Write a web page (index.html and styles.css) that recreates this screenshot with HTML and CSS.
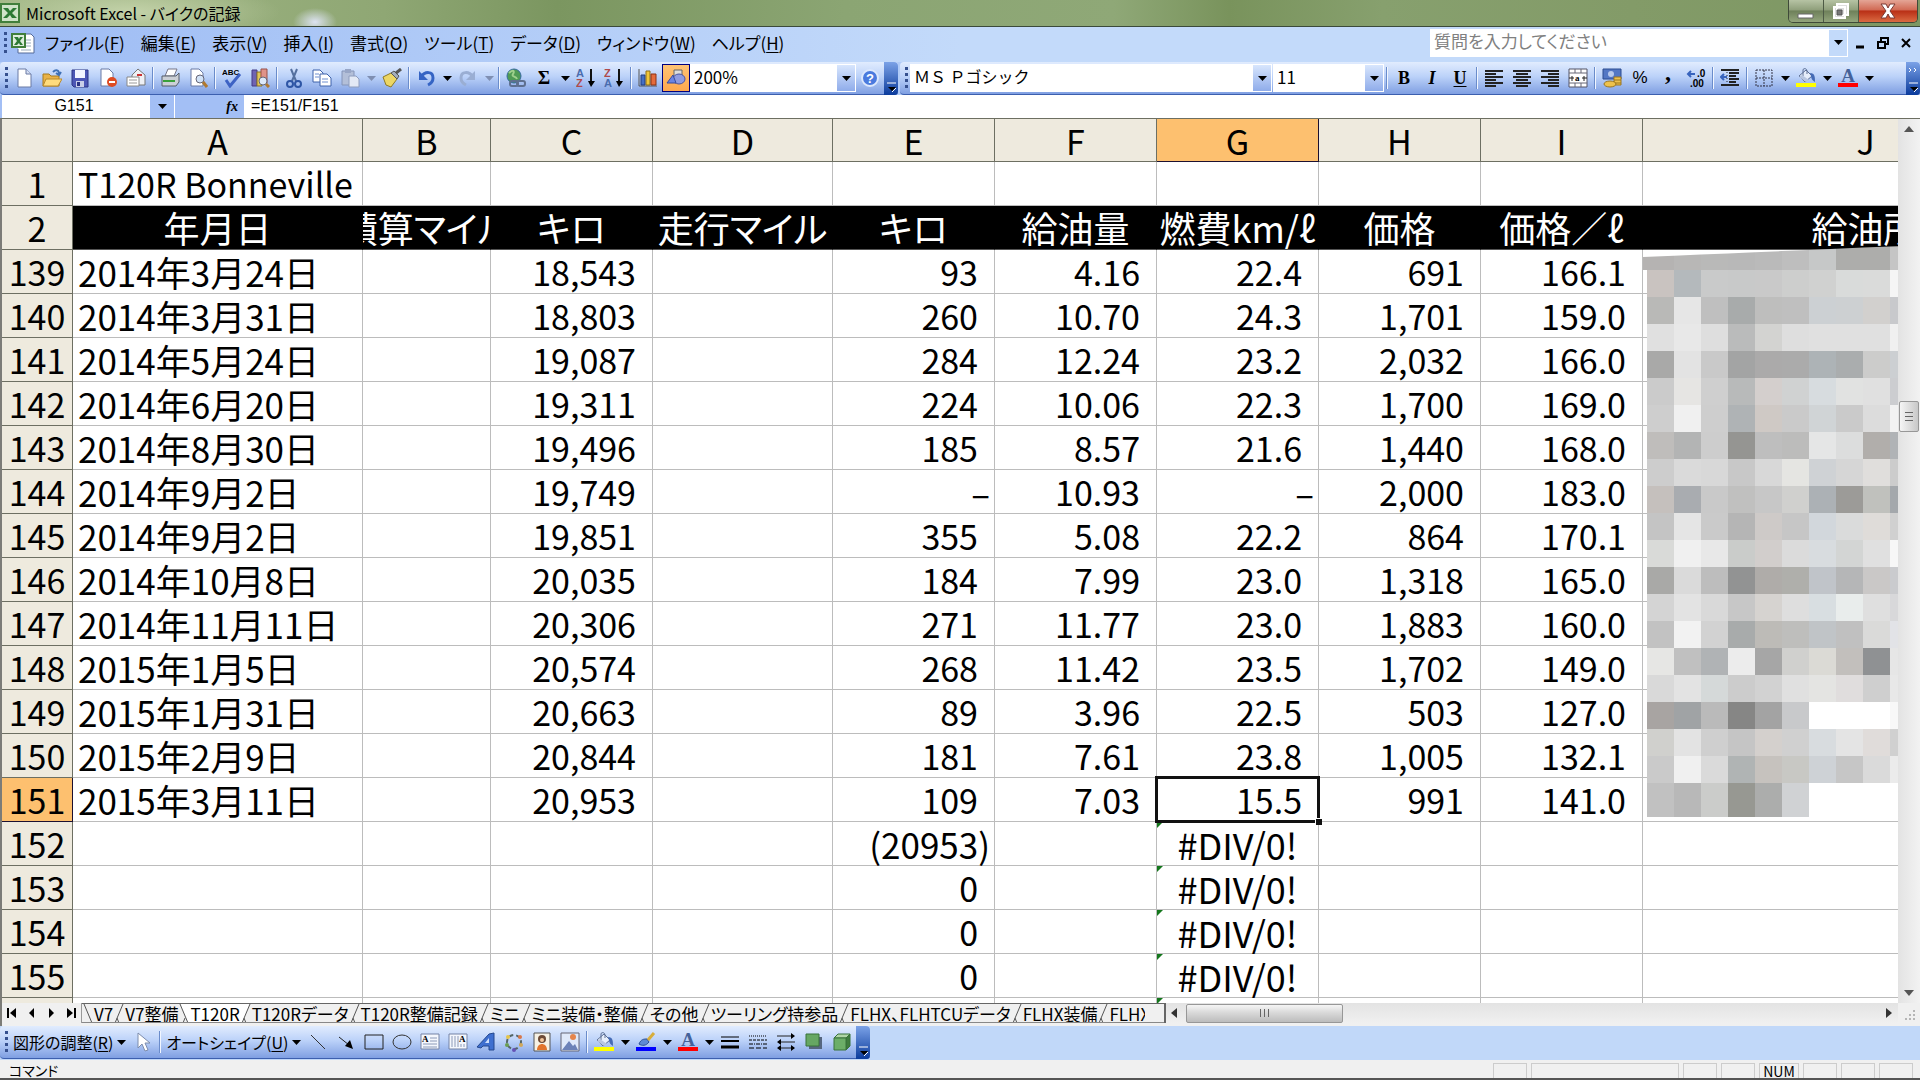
FILE: index.html
```
<!DOCTYPE html>
<html lang="ja">
<head>
<meta charset="utf-8">
<title>Microsoft Excel - バイクの記録</title>
<link rel="stylesheet" href="styles.css">
</head>
<body>

<!-- shared icons -->
<svg class="defs" aria-hidden="true">
    <symbol id="caret" viewBox="0 0 9 5"><path d="M0 0h9L4.500 5z"/></symbol>
    <symbol id="bucket" viewBox="0 0 20 20">
        <path d="M3 8l7-6 6 6-7 6z" fill="#e6eefb" stroke="#5c6f94"/>
        <path d="M7 8V2c0-2 4-2 4 1v3" fill="none" stroke="#5c6f94"/>
        <path d="M14 5c5 0 5 4 5 9-2-1-4-3-4-6z" fill="#456bb5"/>
        <path d="M3 9l7 5 3-2-7-5z" fill="#b8c6e0"/>
    </symbol>
    <symbol id="more" viewBox="0 0 14 32">
        <path d="M3 21h9" stroke="#fff"/><path d="M4 25h8l-4 4z"/><path d="M8 30l4-4" stroke="#fff"/>
    </symbol>
    <symbol id="slash" viewBox="0 0 12 20"><path d="M10 0L2 19M4 14l2 5" fill="none" stroke="#555"/></symbol>
    <symbol id="xl" viewBox="0 0 20 20">
        <path d="M1 1h18v18H1z" fill="#cfe3c8" stroke="#417f3b" stroke-width="2"/>
        <path d="M3 5h5l2 3 3-3h4l-5 5 5 5h-5l-2-3-3 3H3l5-5z" fill="#2d7a34"/>
    </symbol>
</svg>

<header class="titlebar">
    <svg class="app-icon" viewBox="0 0 20 20"><use href="#xl"/></svg>
    <span class="title">Microsoft Excel - バイクの記録</span>
    <div class="window-buttons">
        <button class="min" aria-label="最小化"><svg width="18" height="16"><path d="M1 11h15v4H1z" fill="#fff" stroke="#666"/></svg></button>
        <button class="max" aria-label="元に戻す"><svg width="18" height="18"><path d="M5 2h11v11H5zM2 5h11v11H2z" fill="#ddd" stroke="#fff" stroke-width="2"/><path d="M5 8h5v5H5z" fill="#777" stroke="#555"/></svg></button>
        <button class="close" aria-label="閉じる"><svg width="18" height="16"><path d="M2 1h5l2 4 2-4h5l-5 7 5 7h-5l-2-4-2 4H2l5-7z" fill="#fff" stroke="#7a3a34"/></svg></button>
    </div>
</header>

<nav class="menubar">
    <i class="grip"></i>
    <svg class="doc-icon" viewBox="0 0 24 24"><path d="M11 3h9l3 3v16H7v-4" fill="#fff" stroke="#556a99"/><path d="M14 9h6M14 12h6M10 19h10M14 15h6" stroke="#9ab"/><path d="M1 3h13v13H1z" fill="#dfeedd" stroke="#417f3b" stroke-width="2"/><path d="M3 6h4l1 2 1-2h3l-3 4 3 4H9l-1-2-2 2H3l3-4z" fill="#2d7a34"/></svg>
    <button>ファイル(<u>F</u>)</button>
    <button>編集(<u>E</u>)</button>
    <button>表示(<u>V</u>)</button>
    <button>挿入(<u>I</u>)</button>
    <button>書式(<u>O</u>)</button>
    <button>ツール(<u>T</u>)</button>
    <button>データ(<u>D</u>)</button>
    <button>ウィンドウ(<u>W</u>)</button>
    <button>ヘルプ(<u>H</u>)</button>
    <div class="ask">
        <input type="text" aria-label="質問" placeholder="質問を入力してください">
        <span class="drop"><svg class="caret"><use href="#caret"/></svg></span>
    </div>
    <button class="doc-btn" aria-label="ブックの最小化"><svg width="14" height="14"><path d="M3 11h8" stroke="#000" stroke-width="3"/></svg></button>
    <button class="doc-btn" aria-label="ブックを元に戻す"><svg width="14" height="14"><path d="M5 5V2h7v6H9" fill="none" stroke="#000" stroke-width="2"/><path d="M2 6h7v6H2z" fill="none" stroke="#000" stroke-width="2"/></svg></button>
    <button class="doc-btn" aria-label="ブックを閉じる"><svg width="14" height="14"><path d="M3 3l8 8M11 3l-8 8" stroke="#000" stroke-width="2"/></svg></button>
</nav>

<div class="toolbars">
    <div class="toolbar">
        <i class="grip"></i>
        <button aria-label="新規作成"><svg viewBox="0 0 20 20"><path d="M4 1h8l5 5v13H4z" fill="#fff" stroke="#6a7ba5"/><path d="M12 1v5h5" fill="#d5def2" stroke="#6a7ba5"/></svg></button>
        <button aria-label="開く"><svg viewBox="0 0 20 20"><path d="M1 6h6l2 2h8v10H1z" fill="#e9b247" stroke="#a77a1e"/><path d="M4 11h16l-4 7H1z" fill="#ffdc7d" stroke="#b98a2c"/><path d="M11 4c3-3 6-2 6 2M14 5l3 2 2-3" fill="none" stroke="#3f70b6" stroke-width="2"/></svg></button>
        <button aria-label="上書き保存"><svg viewBox="0 0 20 20"><path d="M2 2h16v17H4l-2-2z" fill="#4c57b5" stroke="#2b3484"/><path d="M5 2h10v8H5z" fill="#f2f5ff"/><path d="M6 13h8v6H6z" fill="#c9cfe8"/><path d="M7 14h3v4H7z" fill="#2b3484"/></svg></button>
        <button aria-label="アクセス権"><svg viewBox="0 0 20 20"><path d="M3 1h8l4 4v13H3z" fill="#fff" stroke="#6a7ba5"/><circle cx="14" cy="14" r="5" fill="#de4b24"/><path d="M11 14h6" stroke="#fff" stroke-width="2"/></svg></button>
        <button aria-label="電子メール"><svg viewBox="0 0 20 20"><path d="M6 7l6-6 7 6v10H6z" fill="#eef0f4" stroke="#777"/><path d="M11 7h5" stroke="#c33" stroke-width="2"/><path d="M1 9h12v9H1z" fill="#fff" stroke="#888"/><path d="M3 12h8M3 15h8" stroke="#999"/></svg></button>
        <i class="sep"></i>
        <button aria-label="印刷"><svg viewBox="0 0 20 20"><path d="M8 1h9l-3 7H5z" fill="#fff" stroke="#778"/><path d="M2 8h14l3-3v9l-3 4H2z" fill="#ccd0d6" stroke="#555d68"/><path d="M3 13h12" stroke="#3aa03a" stroke-width="2"/></svg></button>
        <button aria-label="印刷プレビュー"><svg viewBox="0 0 20 20"><path d="M3 1h8l4 4v13H3z" fill="#fff" stroke="#6a7ba5"/><circle cx="12" cy="11" r="4" fill="#d2e3f8" stroke="#667"/><path d="M15 14l4 5" stroke="#b07930" stroke-width="3"/></svg></button>
        <i class="sep"></i>
        <button aria-label="スペルチェック"><svg viewBox="0 0 20 20"><text x="0" y="7" class="abc">ABC</text><path d="M4 12l4 6L18 6" fill="none" stroke="#3d62c4" stroke-width="3"/></svg></button>
        <button aria-label="リサーチ"><svg viewBox="0 0 20 20"><path d="M2 2h5v16H2z" fill="#6f63b2" stroke="#443a85"/><path d="M7 4h5v14H7z" fill="#e1c65a" stroke="#8d7424"/><path d="M11 1h6v14h-6z" fill="#e0938a" stroke="#995048"/><circle cx="13" cy="13" r="4" fill="#dce9fa" stroke="#667"/><path d="M16 16l3 3" stroke="#b07930" stroke-width="3"/></svg></button>
        <i class="sep"></i>
        <button aria-label="切り取り"><svg viewBox="0 0 20 20"><path d="M7 1l5 12M13 1L8 13" stroke="#55709f" stroke-width="2"/><circle cx="6" cy="16" r="3" fill="none" stroke="#2e55a5" stroke-width="2"/><circle cx="14" cy="16" r="3" fill="none" stroke="#2e55a5" stroke-width="2"/></svg></button>
        <button aria-label="コピー"><svg viewBox="0 0 20 20"><path d="M1 2h7l3 3v9H1z" fill="#fff" stroke="#3e62ab"/><path d="M8 6h7l4 4v8H8z" fill="#fff" stroke="#3e62ab"/><path d="M3 6h4M3 9h4M10 11h6M10 14h6" stroke="#6f8fd0"/></svg></button>
        <button aria-label="貼り付け"><svg viewBox="0 0 20 20"><path d="M2 3h12v14H2z" fill="#b3bfd8" stroke="#8494b8"/><path d="M5 1h6v4H5z" fill="#98a6c6"/><path d="M9 8h7l3 3v8H9z" fill="#e3e9f5" stroke="#8e9dbe"/></svg></button>
        <button class="arrow off" aria-label="貼り付けの種類"><svg class="caret"><use href="#caret"/></svg></button>
        <button aria-label="書式のコピー"><svg viewBox="0 0 20 20"><path d="M1 9l8-4 6 6-6 8-5-2z" fill="#ecd664" stroke="#8e7a24"/><path d="M9 5l3-2 5 5-2 3z" fill="#a3adbb" stroke="#555"/><path d="M14 5l5-4" stroke="#555" stroke-width="3"/></svg></button>
        <i class="sep"></i>
        <button aria-label="元に戻す"><svg viewBox="0 0 20 20"><path d="M5 9c4-6 12-6 12 1 0 4-3 6-5 7" fill="none" stroke="#3564c4" stroke-width="3"/><path d="M3 3v9h9z" fill="#3564c4"/></svg></button>
        <button class="arrow" aria-label="元に戻す一覧"><svg class="caret"><use href="#caret"/></svg></button>
        <button aria-label="やり直し"><svg viewBox="0 0 20 20"><path d="M15 9C11 3 3 3 3 10c0 4 3 6 5 7" fill="none" stroke="#9aaed3" stroke-width="3"/><path d="M17 3v9H8z" fill="#9aaed3"/></svg></button>
        <button class="arrow off" aria-label="やり直し一覧"><svg class="caret"><use href="#caret"/></svg></button>
        <i class="sep"></i>
        <button aria-label="ハイパーリンク"><svg viewBox="0 0 20 20"><circle cx="8" cy="8" r="7" fill="#4f9a55" stroke="#37699f"/><path d="M3 5c4-4 6-2 4 1s3 2 4 5" fill="none" stroke="#9fd08c" stroke-width="2"/><rect x="4" y="13" width="8" height="5" rx="2" fill="none" stroke="#5e6f8f" stroke-width="2"/><rect x="11" y="13" width="8" height="5" rx="2" fill="none" stroke="#5e6f8f" stroke-width="2"/></svg></button>
        <button class="sigma" aria-label="オート SUM">Σ</button>
        <button class="arrow" aria-label="関数一覧"><svg class="caret"><use href="#caret"/></svg></button>
        <button aria-label="昇順"><svg viewBox="0 0 20 20"><text x="0" y="9" class="sort blue">A</text><text x="0" y="19" class="sort red">Z</text><path d="M15 1v14" stroke="#111" stroke-width="2"/><path d="M12 13h7l-4 6z"/></svg></button>
        <button aria-label="降順"><svg viewBox="0 0 20 20"><text x="0" y="9" class="sort red">Z</text><text x="0" y="19" class="sort blue">A</text><path d="M15 1v14" stroke="#111" stroke-width="2"/><path d="M12 13h7l-4 6z"/></svg></button>
        <i class="sep"></i>
        <button aria-label="グラフ"><svg viewBox="0 0 20 20"><path d="M1 1v17h18" fill="none" stroke="#555"/><path d="M3 7h4v10H3z" fill="#456fc4" stroke="#223f80"/><path d="M8 3h4v14H8z" fill="#f0c63b" stroke="#8d6f17"/><path d="M13 6h5v11h-5z" fill="#e46b3c" stroke="#8d3214"/></svg></button>
        <button class="pressed" aria-label="図形描画"><svg viewBox="0 0 20 20"><path d="M8 2h8v8H8z" fill="#ddd" stroke="#666"/><ellipse cx="13" cy="11" rx="6" ry="5" fill="#8f9be0" stroke="#4b55a0"/><path d="M1 15l6-8 3 8z" fill="#6b84e2" stroke="#384b9f"/></svg></button>
        <div class="combo zoom">
            <select aria-label="ズーム"><option>200%</option></select>
            <span class="drop"><svg class="caret"><use href="#caret"/></svg></span>
        </div>
        <button aria-label="ヘルプ"><svg viewBox="0 0 20 20"><circle cx="10" cy="10" r="8" fill="#4a7ade" stroke="#dce8fc" stroke-width="2"/><text x="10" y="15" class="q">?</text></svg></button>
        <button class="more" aria-label="ツールバー オプション"><svg><use href="#more"/></svg></button>
    </div>
    <div class="toolbar format">
        <i class="grip"></i>
        <div class="combo font">
            <select aria-label="フォント"><option>ＭＳ Ｐゴシック</option></select>
            <span class="drop"><svg class="caret"><use href="#caret"/></svg></span>
        </div>
        <div class="combo size">
            <select aria-label="フォント サイズ"><option>11</option></select>
            <span class="drop"><svg class="caret"><use href="#caret"/></svg></span>
        </div>
        <i class="sep"></i>
        <button class="letter"><b>B</b></button>
        <button class="letter"><em>I</em></button>
        <button class="letter"><u>U</u></button>
        <i class="sep"></i>
        <button aria-label="左揃え"><svg viewBox="0 0 20 20"><path d="M1 3h18M1 6h11M1 9h18M1 12h11M1 15h18M1 18h11" stroke="#222" stroke-width="2"/></svg></button>
        <button aria-label="中央揃え"><svg viewBox="0 0 20 20"><path d="M1 3h18M4 6h12M1 9h18M4 12h12M1 15h18M4 18h12" stroke="#222" stroke-width="2"/></svg></button>
        <button aria-label="右揃え"><svg viewBox="0 0 20 20"><path d="M1 3h18M8 6h11M1 9h18M8 12h11M1 15h18M8 18h11" stroke="#222" stroke-width="2"/></svg></button>
        <button aria-label="セルを結合して中央揃え"><svg viewBox="0 0 20 20"><path d="M1 1h18v18H1z" fill="#fff" stroke="#556"/><path d="M1 5h18M1 15h18M7 1v4M13 1v4M7 15v4M13 15v4" stroke="#667"/><path d="M1 10h5M14 10h5M4 8v5M16 8v5" stroke="#222"/><text x="7" y="13" class="mini">a</text></svg></button>
        <i class="sep"></i>
        <button aria-label="通貨スタイル"><svg viewBox="0 0 20 20"><path d="M1 1h18v10H1z" fill="#5377c4" stroke="#2d4c90"/><circle cx="9" cy="6" r="3" fill="#b7c9ec"/><path d="M12 9h7v8h-7z" fill="#eec24d" stroke="#9b7620"/><path d="M12 12h7M12 15h7" stroke="#9b7620"/><ellipse cx="8" cy="16" rx="6" ry="3" fill="#eec24d" stroke="#9b7620"/></svg></button>
        <button class="pct">%</button>
        <button class="comma">,</button>
        <button aria-label="小数点表示桁上げ"><svg viewBox="0 0 20 20"><path d="M2 6h7M5 3L2 6l3 3" fill="none" stroke="#3864bd" stroke-width="2"/><text x="11" y="9" class="dec">.0</text><text x="4" y="19" class="dec">.00</text></svg></button>
        <i class="sep"></i>
        <button aria-label="インデント解除"><svg viewBox="0 0 20 20"><path d="M1 2h18M9 5h10M9 8h7M9 11h10M9 14h7M1 17h18" stroke="#222" stroke-width="2"/><path d="M7 9H1M4 6L1 9l3 3" fill="none" stroke="#3864bd" stroke-width="2"/><path d="M7 1v18" stroke="#222" stroke-dasharray="1 2"/></svg></button>
        <i class="sep"></i>
        <button aria-label="罫線"><svg viewBox="0 0 20 20"><path d="M2 2h16v16H2zM10 2v16M2 10h16" fill="none" stroke="#334" stroke-dasharray="2 1"/></svg></button>
        <button class="arrow" aria-label="罫線一覧"><svg class="caret"><use href="#caret"/></svg></button>
        <button aria-label="塗りつぶしの色"><svg viewBox="0 0 20 20"><use href="#bucket"/><path d="M0 15h20v4H0z" fill="#ff0"/></svg></button>
        <button class="arrow" aria-label="塗りつぶしの色一覧"><svg class="caret"><use href="#caret"/></svg></button>
        <button aria-label="フォントの色"><svg viewBox="0 0 20 20"><text x="10" y="14" class="font-a">A</text><path d="M0 15h20v4H0z" fill="#f00"/></svg></button>
        <button class="arrow" aria-label="フォントの色一覧"><svg class="caret"><use href="#caret"/></svg></button>
        <button class="more" aria-label="ツールバー オプション"><svg viewBox="0 0 14 32"><path d="M3 6l2 2-2 2M8 6l2 2-2 2" fill="none" stroke="#fff"/><use href="#more"/></svg></button>
    </div>
</div>

<div class="formulabar">
    <input class="namebox" type="text" aria-label="名前ボックス" value="G151">
    <button class="name-drop" aria-label="名前一覧"><svg class="caret"><use href="#caret"/></svg></button>
    <button class="fx" aria-label="関数の挿入">fx</button>
    <input class="formula" type="text" aria-label="数式バー" value="=E151/F151">
</div>

<main class="workbook">
    <div class="sheet">
        <table>
            <colgroup><col class="c-row"><col class="c-a"><col class="c-b"><col class="c-c"><col class="c-d"><col class="c-e"><col class="c-f"><col class="c-g"><col class="c-h"><col class="c-i"><col class="c-j"></colgroup>
            <thead>
                <tr><th></th><th>A</th><th>B</th><th>C</th><th>D</th><th>E</th><th>F</th><th class="on">G</th><th>H</th><th>I</th><th>J</th></tr>
            </thead>
            <tbody>
                <tr class="bike"><th>1</th><td>T120R Bonneville</td><td></td><td></td><td></td><td></td><td></td><td></td><td></td><td></td><td></td></tr>
                <tr class="labels"><th>2</th><td><div>年月日</div></td><td><div>積算マイル</div></td><td><div>キロ</div></td><td><div>走行マイル</div></td><td><div>キロ</div></td><td><div>給油量</div></td><td><div>燃費km/ℓ</div></td><td><div>価格</div></td><td><div>価格／ℓ</div></td><td><div>給油所</div></td></tr>
                <tr><th>139</th><td>2014年3月24日</td><td></td><td>18,543</td><td></td><td>93</td><td>4.16</td><td>22.4</td><td>691</td><td>166.1</td><td class="shop"><svg id="mosaic" width="258" height="572"></svg></td></tr>
                <tr><th>140</th><td>2014年3月31日</td><td></td><td>18,803</td><td></td><td>260</td><td>10.70</td><td>24.3</td><td>1,701</td><td>159.0</td><td></td></tr>
                <tr><th>141</th><td>2014年5月24日</td><td></td><td>19,087</td><td></td><td>284</td><td>12.24</td><td>23.2</td><td>2,032</td><td>166.0</td><td></td></tr>
                <tr><th>142</th><td>2014年6月20日</td><td></td><td>19,311</td><td></td><td>224</td><td>10.06</td><td>22.3</td><td>1,700</td><td>169.0</td><td></td></tr>
                <tr><th>143</th><td>2014年8月30日</td><td></td><td>19,496</td><td></td><td>185</td><td>8.57</td><td>21.6</td><td>1,440</td><td>168.0</td><td></td></tr>
                <tr><th>144</th><td>2014年9月2日</td><td></td><td>19,749</td><td></td><td class="text">–</td><td>10.93</td><td class="text">–</td><td>2,000</td><td>183.0</td><td></td></tr>
                <tr><th>145</th><td>2014年9月2日</td><td></td><td>19,851</td><td></td><td>355</td><td>5.08</td><td>22.2</td><td>864</td><td>170.1</td><td></td></tr>
                <tr><th>146</th><td>2014年10月8日</td><td></td><td>20,035</td><td></td><td>184</td><td>7.99</td><td>23.0</td><td>1,318</td><td>165.0</td><td></td></tr>
                <tr><th>147</th><td>2014年11月11日</td><td></td><td>20,306</td><td></td><td>271</td><td>11.77</td><td>23.0</td><td>1,883</td><td>160.0</td><td></td></tr>
                <tr><th>148</th><td>2015年1月5日</td><td></td><td>20,574</td><td></td><td>268</td><td>11.42</td><td>23.5</td><td>1,702</td><td>149.0</td><td></td></tr>
                <tr><th>149</th><td>2015年1月31日</td><td></td><td>20,663</td><td></td><td>89</td><td>3.96</td><td>22.5</td><td>503</td><td>127.0</td><td></td></tr>
                <tr><th>150</th><td>2015年2月9日</td><td></td><td>20,844</td><td></td><td>181</td><td>7.61</td><td>23.8</td><td>1,005</td><td>132.1</td><td></td></tr>
                <tr><th class="on">151</th><td>2015年3月11日</td><td></td><td>20,953</td><td></td><td>109</td><td>7.03</td><td class="active">15.5</td><td>991</td><td>141.0</td><td></td></tr>
                <tr><th>152</th><td></td><td></td><td></td><td></td><td class="text">(20953)</td><td></td><td class="error">#DIV/0!</td><td></td><td></td><td></td></tr>
                <tr><th>153</th><td></td><td></td><td></td><td></td><td>0</td><td></td><td class="error">#DIV/0!</td><td></td><td></td><td></td></tr>
                <tr><th>154</th><td></td><td></td><td></td><td></td><td>0</td><td></td><td class="error">#DIV/0!</td><td></td><td></td><td></td></tr>
                <tr><th>155</th><td></td><td></td><td></td><td></td><td>0</td><td></td><td class="error">#DIV/0!</td><td></td><td></td><td></td></tr>
                <tr><th></th><td></td><td></td><td></td><td></td><td></td><td></td><td class="error"></td><td></td><td></td><td></td></tr>
            </tbody>
        </table>
    </div>
    <div class="vscroll">
        <svg width="10" height="6"><path d="M0 6h10L5 0z" fill="#555"/></svg>
        <i class="above"></i>
        <div class="thumb"></div>
        <i class="below"></i>
        <svg width="10" height="6"><path d="M0 0h10L5 6z" fill="#555"/></svg>
    </div>
</main>

<div class="tabbar">
    <div class="tabnav">
        <button aria-label="先頭"><svg width="10" height="10"><path d="M1 0v10" stroke="#000" stroke-width="2"/><path d="M9 0v10L3 5z"/></svg></button>
        <button aria-label="前へ"><svg width="10" height="10"><path d="M7 0v10L2 5z"/></svg></button>
        <button aria-label="次へ"><svg width="10" height="10"><path d="M3 0v10l5-5z"/></svg></button>
        <button aria-label="最後"><svg width="10" height="10"><path d="M9 0v10" stroke="#000" stroke-width="2"/><path d="M1 0v10l6-5z"/></svg></button>
    </div>
    <div class="tabs">
        <svg class="slash" viewBox="0 0 12 20"><path d="M2 0l8 19" stroke="#555"/></svg>
        <button>V7</button><svg class="slash"><use href="#slash"/></svg>
        <button>V7整備</button><svg class="slash" viewBox="0 0 12 20"><path d="M2 0l8 19h2V0z" fill="#fff"/><path d="M2 0l8 19M7 14l-2 5" stroke="#555"/></svg>
        <button class="current">T120R</button><svg class="slash" viewBox="0 0 12 20"><path d="M0 0h10L2 19H0z" fill="#fff"/><path d="M10 0L2 19M4 14l2 5" stroke="#555"/></svg>
        <button>T120Rデータ</button><svg class="slash"><use href="#slash"/></svg>
        <button>T120R整備記録</button><svg class="slash"><use href="#slash"/></svg>
        <button>ミニ</button><svg class="slash"><use href="#slash"/></svg>
        <button>ミニ装備・整備</button><svg class="slash"><use href="#slash"/></svg>
        <button>その他</button><svg class="slash"><use href="#slash"/></svg>
        <button>ツーリング持参品</button><svg class="slash"><use href="#slash"/></svg>
        <button>FLHX、FLHTCUデータ</button><svg class="slash"><use href="#slash"/></svg>
        <button>FLHX装備</button><svg class="slash"><use href="#slash"/></svg>
        <button class="last">FLHX整備</button>
    </div>
    <div class="hscroll">
        <svg width="6" height="10"><path d="M6 0v10L0 5z" fill="#333"/></svg>
        <div class="thumb"></div>
        <i class="rest"></i>
        <svg width="6" height="10"><path d="M0 0v10l6-5z" fill="#333"/></svg>
    </div>
    <svg class="corner" viewBox="0 0 22 22"><path d="M15 7h2v2h-2zM11 11h2v2h-2zM15 11h2v2h-2zM7 15h2v2H7zM11 15h2v2h-2zM15 15h2v2h-2z" fill="#b5b5b5"/></svg>
</div>

<div class="drawbar">
    <div class="toolbar">
        <i class="grip"></i>
        <button class="label"><span>図形の調整(<u>R</u>)</span><svg class="caret"><use href="#caret"/></svg></button>
        <button aria-label="オブジェクトの選択"><svg viewBox="0 0 20 20"><path d="M5 1v15l4-4 3 7 3-1-3-7h5z" fill="#fff" stroke="#7d8cab"/></svg></button>
        <i class="sep"></i>
        <button class="label"><span>オートシェイプ(<u>U</u>)</span><svg class="caret"><use href="#caret"/></svg></button>
        <button aria-label="直線"><svg viewBox="0 0 20 20"><path d="M3 3l14 14" stroke="#333"/></svg></button>
        <button aria-label="矢印"><svg viewBox="0 0 20 20"><path d="M3 5l10 8" stroke="#222"/><path d="M9 14l5-6 3 9z"/></svg></button>
        <button aria-label="四角形"><svg viewBox="0 0 20 20"><path d="M1 3h18v14H1z" fill="none" stroke="#222"/></svg></button>
        <button aria-label="楕円"><svg viewBox="0 0 20 20"><ellipse cx="10" cy="10" rx="9" ry="7" fill="none" stroke="#333"/></svg></button>
        <button aria-label="テキスト ボックス"><svg viewBox="0 0 20 20"><path d="M1 2h18v15H1z" fill="#f4f7fd" stroke="#7483a5"/><text x="2" y="10" class="mini">A</text><path d="M10 6h7M10 9h7M3 12h14M3 15h14" stroke="#8c9ab8"/></svg></button>
        <button aria-label="縦書きテキスト ボックス"><svg viewBox="0 0 20 20"><path d="M1 2h18v15H1z" fill="#f4f7fd" stroke="#7483a5"/><text x="11" y="10" class="mini">A</text><path d="M4 4v11M7 4v11M10 4v11M13 12v3M16 12v3" stroke="#8c9ab8"/></svg></button>
        <button aria-label="ワードアート"><svg viewBox="0 0 20 20"><path d="M1 15L13 2l5-1v17h-5v-4H7l-2 2z" fill="#3e6fd0" stroke="#24488f"/><path d="M9 11l4-5v5z" fill="#cfe0fb"/></svg></button>
        <button aria-label="図表"><svg viewBox="0 0 20 20"><circle cx="10" cy="10" r="7" fill="none" stroke="#566" stroke-width="2" stroke-dasharray="4 3"/><circle cx="4" cy="5" r="2" fill="#e5c54a"/><circle cx="16" cy="5" r="2" fill="#d8784a"/><circle cx="3" cy="13" r="2" fill="#6a9e52"/><circle cx="17" cy="13" r="2" fill="#d1a85a"/><circle cx="10" cy="18" r="2" fill="#6452b5"/></svg></button>
        <button aria-label="クリップ アート"><svg viewBox="0 0 20 20"><path d="M2 1h16v18H2z" fill="#f6f1e4" stroke="#555"/><circle cx="10" cy="7" r="4" fill="#6d4a36"/><circle cx="10" cy="8" r="2" fill="#f2c79c"/><path d="M5 18c0-8 10-8 10 0z" fill="#e2752d"/></svg></button>
        <button aria-label="図の挿入"><svg viewBox="0 0 20 20"><path d="M1 1h18v18H1z" fill="#dfe9fa" stroke="#667"/><path d="M2 18l7-9 4 5 2-2 3 6z" fill="#6c82b8"/><circle cx="13" cy="5" r="3" fill="#e5854c"/></svg></button>
        <i class="sep"></i>
        <button aria-label="塗りつぶしの色"><svg viewBox="0 0 20 20"><use href="#bucket"/><path d="M0 15h20v4H0z" fill="#ff0"/></svg></button>
        <button class="arrow" aria-label="塗りつぶしの色一覧"><svg class="caret"><use href="#caret"/></svg></button>
        <button aria-label="線の色"><svg viewBox="0 0 20 20"><path d="M3 12c2-5 5-5 8-5l2 3c-3 4-7 4-10 2z" fill="#5f8ad5" stroke="#2c4f92"/><path d="M12 8l6-7" stroke="#d7ad3b" stroke-width="3"/><path d="M0 15h20v4H0z" fill="#00f"/></svg></button>
        <button class="arrow" aria-label="線の色一覧"><svg class="caret"><use href="#caret"/></svg></button>
        <button aria-label="フォントの色"><svg viewBox="0 0 20 20"><text x="10" y="14" class="font-a">A</text><path d="M0 15h20v4H0z" fill="#f00"/></svg></button>
        <button class="arrow" aria-label="フォントの色一覧"><svg class="caret"><use href="#caret"/></svg></button>
        <button aria-label="線のスタイル"><svg viewBox="0 0 20 20"><path d="M1 5h18" stroke="#000"/><path d="M1 9h18" stroke="#000" stroke-width="2"/><path d="M1 15h18" stroke="#000" stroke-width="3"/></svg></button>
        <button aria-label="点線のスタイル"><svg viewBox="0 0 20 20"><path d="M1 4h18" stroke="#000" stroke-dasharray="1 1"/><path d="M1 8h18" stroke="#000" stroke-dasharray="3 1"/><path d="M1 12h18" stroke="#000" stroke-dasharray="4 1 1 1"/><path d="M1 16h18" stroke="#000" stroke-dasharray="5 2"/></svg></button>
        <button aria-label="矢印のスタイル"><svg viewBox="0 0 20 20"><path d="M1 4h16M3 10h16M2 16h16" stroke="#222"/><path d="M15 1l4 3-4 3zM5 7l-4 3 4 3zM5 13l-4 3 4 3zM15 13l4 3-4 3z"/></svg></button>
        <button aria-label="影付きスタイル"><svg viewBox="0 0 20 20"><path d="M5 5h13v12H5z" fill="#56667f"/><path d="M2 2h13v12H2z" fill="#66a763" stroke="#39733a"/></svg></button>
        <button aria-label="3-D スタイル"><svg viewBox="0 0 20 20"><path d="M2 6l4-4h12l-4 4z" fill="#b0d6a6" stroke="#39733a"/><path d="M14 6l4-4v12l-4 4z" fill="#3f7d3e" stroke="#39733a"/><path d="M2 6h12v12H2z" fill="#6cae68" stroke="#39733a"/></svg></button>
        <button class="more" aria-label="ツールバー オプション"><svg><use href="#more"/></svg></button>
    </div>
</div>

<footer class="statusbar">
    <span class="message">コマンド</span>
    <span class="pane"></span>
    <span class="pane wide"></span>
    <span class="pane"></span>
    <span class="pane"></span>
    <span class="pane num">NUM</span>
    <span class="pane"></span>
    <span class="pane"></span>
    <span class="pane"></span>
</footer>

<script src="mosaic.js"></script>
</body>
</html>
```
FILE: styles.css
```
* {
    box-sizing: border-box;
}

body {
    margin: 0;
    height: 100vh;
    display: flex;
    flex-direction: column;
    overflow: hidden;
    background: #f0f0f0;
    color: #000;
    font-family: "Noto Sans CJK JP", sans-serif;
    font-size: 17px;
    font-feature-settings: "palt";
}

button, input, select {
    margin: 0;
    padding: 0;
    border: 0;
    border-radius: 0;
    background: none;
    color: inherit;
    font: inherit;
    font-feature-settings: inherit;
}

u {
    text-underline-offset: 2px;
}

.defs {
    position: absolute;
    width: 0;
    height: 0;
}

.caret {
    width: 9px;
    height: 5px;
    flex: none;
}

/* title bar */

.titlebar {
    flex: none;
    display: flex;
    align-items: center;
    height: 27px;
    border-bottom: 1px solid #3b4a3a;
    background:
        radial-gradient(ellipse 22px 14px at 315px 22px, #dde3f2, transparent),
        radial-gradient(ellipse 150px 30px at 130px 12px, #c3d2a9, transparent),
        linear-gradient(90deg, #a3b887 0, #8fa774 20%, #7b9660 29%, #8ba573 44%, #8fa877 58%, #79935c 64%, #87a06e 72%, #839b68 85%, #7d9763);
}

.app-icon {
    width: 20px;
    height: 20px;
}

.title {
    flex: 1;
    padding-left: 6px;
    font-size: 16px;
    line-height: 24px;
}

.window-buttons {
    display: flex;
    align-self: flex-start;
    margin-right: 2px;
    border: 1px solid #3f4a39;
    border-top: 0;
    border-radius: 0 0 5px 5px;
    overflow: hidden;
}

.window-buttons button {
    display: flex;
    align-items: center;
    justify-content: center;
    width: 35px;
    height: 22px;
    border-right: 1px solid #4d5a45;
    background: linear-gradient(#b6c3a4, #8f9f7b 45%, #6e805a 50%, #93a57c);
}

.window-buttons .close {
    width: 58px;
    border: 0;
    background: linear-gradient(#e4a596, #d16a54 45%, #b92f16 50%, #da6a42);
}

/* menu bar */

.menubar {
    flex: none;
    display: flex;
    align-items: center;
    height: 35px;
    padding: 0 3px 4px 0;
    background: linear-gradient(90deg, #9ebcf4, #c3dafa 50%);
}

.grip {
    flex: none;
    width: 3px;
    height: 22px;
    margin-left: 4px;
    background: repeating-linear-gradient(#35508f 0 3px, transparent 3px 6px);
}

.doc-icon {
    width: 24px;
    height: 24px;
    margin: 0 2px 0 4px;
}

.menubar button {
    padding: 0 8px;
    line-height: 28px;
}

.ask {
    display: flex;
    width: 418px;
    height: 28px;
    margin-left: auto;
    background: #fff;
}

.ask input {
    flex: 1;
    min-width: 0;
    padding: 0 0 4px 4px;
}

.ask input::placeholder {
    color: #808080;
    opacity: 1;
}

.drop {
    flex: none;
    display: flex;
    align-items: center;
    justify-content: center;
    width: 18px;
    margin: 1px;
    background: linear-gradient(#d8e6fd, #8facea);
    pointer-events: none;
}

.ask .drop {
    background: #c3dafa;
}

.menubar .doc-btn {
    display: flex;
    justify-content: center;
    width: 23px;
    padding: 0;
}

/* toolbars */

.toolbars {
    flex: none;
    display: flex;
    gap: 2px;
    background: #b0cbf8;
}

.toolbar {
    display: flex;
    align-items: center;
    height: 33px;
    padding-left: 1px;
    border-bottom: 1px solid #3c5fae;
    border-radius: 4px 3px 3px 4px;
    background: linear-gradient(#e1ecfe, #bcd2f9 45%, #7f9fe2);
}

.toolbar .grip {
    margin-right: 2px;
}

.toolbar button {
    flex: none;
    display: flex;
    align-items: center;
    justify-content: center;
    width: 28px;
    height: 28px;
}

.toolbar button svg {
    width: 20px;
    height: 20px;
}

.toolbar .arrow {
    width: 14px;
}

.toolbar button .caret {
    width: 9px;
    height: 5px;
}

.off {
    fill: #7f8fb2;
}

.toolbar .pressed {
    border: 1px solid #000080;
    background: linear-gradient(#fec374, #ffa84e);
}

.sep {
    flex: none;
    width: 2px;
    height: 22px;
    margin: 0 2px;
    border-left: 1px solid #6a8ccb;
    border-right: 1px solid #f1f6ff;
}

.toolbar .more {
    width: 14px;
    height: 33px;
    border-radius: 0 4px 4px 0;
    background: linear-gradient(#7ba2e7, #0b3b9c);
}

.toolbar .more svg {
    width: 14px;
    height: 32px;
}

.format .more {
    margin-left: auto;
}

.format {
    flex: 1;
}

.combo {
    display: flex;
    height: 28px;
    background: #fff;
}

.combo select {
    flex: 1;
    min-width: 0;
    padding: 0 0 4px 4px;
    appearance: none;
}

.zoom {
    width: 166px;
}

.font {
    width: 362px;
    font-size: 16px;
    font-feature-settings: normal;
}

.size {
    width: 111px;
    margin-left: 1px;
}

.toolbar .sigma {
    font: bold 19px "Liberation Serif", serif;
}

.toolbar .letter {
    font: bold 18px "Liberation Serif", serif;
}

.toolbar .pct {
    font: 17px "Liberation Sans", sans-serif;
}

.toolbar .comma {
    font: bold 24px "Liberation Serif", serif;
    padding-bottom: 12px;
}

.abc {
    font: bold 8px "Liberation Sans", sans-serif;
}

.mini {
    font: bold 9px "Liberation Serif", serif;
}

.dec {
    font: bold 10px "Liberation Sans", sans-serif;
}

.sort {
    font: bold 11px "Liberation Sans", sans-serif;
}

.blue {
    fill: #4a6cae;
}

.red {
    fill: #b04a4a;
}

.q {
    font: bold 13px "Liberation Sans", sans-serif;
    fill: #fff;
    text-anchor: middle;
}

.font-a {
    font: bold 19px "Liberation Serif", serif;
    fill: #456299;
    text-anchor: middle;
}

/* formula bar */

.formulabar {
    flex: none;
    display: flex;
    height: 23px;
    padding-left: 2px;
    background: #a3bff5;
    font-family: "Liberation Sans", sans-serif;
    font-size: 16px;
}

.formulabar input {
    background: #fff;
    padding-bottom: 2px;
}

.namebox {
    width: 148px;
    padding-right: 4px;
    text-align: center;
}

.name-drop {
    display: flex;
    align-items: center;
    justify-content: center;
    width: 25px;
    border-right: 1px solid #fff;
}

.formulabar .fx {
    width: 69px;
    padding-right: 6px;
    text-align: right;
    font: italic bold 14px "Liberation Serif", serif;
}

.formulabar .formula {
    flex: 1;
    padding-left: 7px;
}

/* worksheet */

.workbook {
    flex: 1;
    min-height: 0;
    display: flex;
    border-left: 2px solid #7c7c78;
    border-top: 1px solid #6d6f62;
}

.sheet {
    flex: 1;
    min-width: 0;
    overflow: hidden;
    background: #fff;
}

table {
    width: 2087px;
    table-layout: fixed;
    border-spacing: 0;
    font-size: 34px;
    line-height: 42px;
}

.c-row { width: 71px; }
.c-a { width: 290px; }
.c-b { width: 128px; }
.c-c { width: 162px; }
.c-d { width: 180px; }
.c-e, .c-f, .c-g, .c-h, .c-i { width: 162px; }
.c-j { width: 446px; }

th {
    height: 44px;
    padding: 0;
    border-right: 1px solid #6d6f62;
    border-bottom: 1px solid #6d6f62;
    background: #eeeade;
    font-weight: normal;
}

thead th {
    height: 43px;
    padding-top: 2px;
    line-height: 40px;
}

.on {
    background: #fdc06f;
    border-color: #1c1030;
}

td {
    position: relative;
    height: 44px;
    padding: 0 16px 0 0;
    border-right: 1px solid #bcbcbc;
    border-bottom: 1px solid #bcbcbc;
    text-align: right;
    white-space: nowrap;
}

td:nth-child(2) {
    padding: 0 0 0 5px;
    font-size: 35px;
    text-align: left;
}

.bike td:nth-child(2) {
    font-size: 34px;
}

.labels td,
.labels td:nth-child(2) {
    padding: 0;
    background: #000;
    border-right-color: #000;
    border-bottom-color: #555;
    color: #fff;
    font-size: 36px;
}

.labels div {
    display: flex;
    justify-content: center;
    height: 43px;
    overflow: hidden;
}

.text {
    padding-right: 4px;
    font-size: 35px;
}

.error {
    padding: 0;
    font-size: 36px;
    text-align: center;
}

.error::before {
    content: "";
    position: absolute;
    left: 0;
    top: 0;
    border-top: 6px solid #14771c;
    border-right: 6px solid transparent;
}

.active::before {
    content: "";
    position: absolute;
    z-index: 1;
    inset: -2px;
    border: 3px solid #111;
}

.active::after {
    content: "";
    position: absolute;
    z-index: 1;
    right: -4px;
    bottom: -4px;
    width: 6px;
    height: 6px;
    border: solid #fff;
    border-width: 1px 0 0 1px;
    background: #111;
}

#mosaic {
    position: absolute;
    z-index: 1;
    left: 0;
    top: -4px;
}

/* scroll bars */

.vscroll {
    display: flex;
    flex-direction: column;
    align-items: center;
    width: 22px;
    padding: 7px 0;
    background: linear-gradient(90deg, #e3e3e3, #f2f2f2);
}

.above {
    flex: 13;
}

.below {
    flex: 27;
}

.thumb {
    border: 1px solid #979797;
    border-radius: 2px;
}

.vscroll .thumb {
    width: 20px;
    height: 31px;
    background:
        repeating-linear-gradient(#666 0 1px, transparent 1px 4px) center / 8px 9px no-repeat,
        linear-gradient(90deg, #f5f5f5, #c8c8c8);
}

.hscroll {
    flex: 1;
    display: flex;
    align-items: center;
    padding: 0 6px 0 5px;
    border-left: 2px solid #666;
    background: linear-gradient(#e3e3e3, #f0f0f0);
}

.hscroll .thumb {
    width: 157px;
    height: 19px;
    margin-left: 9px;
    background:
        repeating-linear-gradient(90deg, #666 0 1px, transparent 1px 4px) center / 9px 8px no-repeat,
        linear-gradient(#f5f5f5, #d9d9d9 45%, #bcbcbc);
}

.rest {
    flex: 1;
}

.corner {
    width: 22px;
    height: 22px;
}

/* sheet tabs */

.tabbar {
    flex: none;
    display: flex;
    height: 23px;
    padding-bottom: 3px;
    border-left: 2px solid #7c7c78;
}

.tabnav {
    display: flex;
    width: 80px;
    border-right: 1px solid #999;
}

.tabnav button {
    flex: 1;
    display: flex;
    align-items: center;
    justify-content: center;
}

.tabs {
    display: flex;
    width: 1082px;
    border-top: 1px solid #666;
    border-bottom: 1px solid #888;
    overflow: hidden;
    font-size: 17px;
}

.tabs button {
    flex: none;
    line-height: 17px;
    white-space: nowrap;
}

.tabs .current {
    background: #fff;
    text-decoration: underline;
}

.tabs .last {
    flex: 0 1 36px;
    min-width: 0;
    overflow: hidden;
    text-align: left;
}

.slash {
    flex: none;
    width: 12px;
    height: 20px;
    fill: none;
}

/* drawing toolbar */

.drawbar {
    flex: none;
    display: flex;
    height: 34px;
    background: #c1d8f9;
}

.drawbar .toolbar .label {
    width: auto;
    gap: 4px;
    padding: 0 3px;
    font-size: 16px;
    white-space: nowrap;
}

/* status bar */

.statusbar {
    flex: none;
    display: flex;
    gap: 4px;
    height: 20px;
    padding: 3px 7px 0 9px;
    border-bottom: 2px solid #555;
    font-size: 14px;
    line-height: 14px;
}

.message {
    flex: 1;
}

.pane {
    width: 34px;
    border: 1px solid #ccc;
    border-bottom: 0;
}

.wide {
    width: 148px;
}

.num {
    width: 40px;
    text-align: center;
}
```
FILE: mosaic.js
```
// shop names are masked: one shade per tile, rows from top to bottom
var tiles = [
    "b5b3b2 b8b7b6 b9b9b8 b8b8b8 bababa bebebe c6c8c8 adadab adadab c5c5c5",
    "c9c3c0 b4b9bc c9caca c8c9c9 c9c9c9 cdcecd d0d1d0 d9dbda dadbda f5f5f5",
    "b9b9b7 e6e6e6 bfbfbf a8abab bebebd bfbfbf ccd0d3 cdd0d2 d2d0ce c8c9cc",
    "e0e0e0 e8e8e8 dedede babbbb d3d3d1 dedede e0e0e0 e0e0e0 e0e0e0 f0f0f0",
    "a9a9a8 e3e3e3 c9c9c9 a3a4a4 abaaaa ababab adb3b6 aaadae cccccb cccfd2",
    "cbcbcb e6e5e3 cfcfcf b8baba d4cfcd d0d2d2 d7dcdf e1e2e1 e0e0e0 cccdd0",
    "cecece f0f0f0 cecece afb3b5 cfc9c5 cacaca d0d4d6 cacaca dcdcdc f2f2f2",
    "bfbdbb b3b4b4 cdcdcd 959592 bebebe bcbcbb e5e6e6 dcdddd b1aeab b0b3b6",
    "cdcdcd dadada d8d8d8 c8c8c8 d8d8d8 e5e5e2 cfd2d5 d6d6d6 e0dedc cccccc",
    "c5c0bd a9acb0 c9c9c9 c0c0bf c7c7c7 d0d0ce acb1b5 9c9b98 c0c1bd a4a8ac",
    "c4c4c4 e5e5e5 cacaca b5b5b5 cecac8 c6c6c6 d2d7dc dadbdb dfdcd9 d0d0d0",
    "d9dad8 f0f0f0 e8e8e8 caccca d2cecc dbdbdb d8dcdf d3d5d4 e0e0e0 f7f7f7",
    "a9a9a7 dadada bdbdbd 929393 afaca9 afafab c0c4c9 b5b6b7 cac8c7 cacbce",
    "d4d4d4 e3e3e3 d9d9d9 c7c7c7 d6d3d0 dedede d8dee1 e9edec dfdfdf d8d8da",
    "c2c2c2 f2f2f2 d2d2d2 a8abab bdbbb7 bebebc c0c4c7 c0c0c0 dadad9 e2e3e7",
    "e6e6e4 c0c0c0 b0b3b5 ececec a6a6a6 d0d0ce dbdad5 c2bfbc 8f9193 e6e6e6",
    "d9d9d9 e3e3e3 d5d9d9 cccccc d2d2d2 e0e0e0 e4e4e2 e0dddd cfcfcf e8e8e8",
    "a8a4a2 a0a3a5 bababa 868685 a3a3a3 c8c9cb ffffff ffffff ffffff f8f8f8",
    "d0d0cd e3e3e3 cfcfcf c5c5c5 d4d0cd d0d0d0 d8dcdf e4e4e4 e0dcda d0d0d0",
    "cacaca f0f0f0 dadada b0b4b4 c6c2be c8c8c4 ced2d6 c6c6c6 dadada ebebeb",
    "c1c1c1 b8b8b8 cbccca 979892 acadac d0d2d4 ffffff ffffff ffffff ffffff"
];

var svg = document.getElementById("mosaic");
var ns = "http://www.w3.org/2000/svg";
var size = 27;
var left = 4;

tiles.forEach(function (line, row) {
    line.split(" ").forEach(function (shade, col) {
        var x = left + col * size;
        var y = row * size - 3;
        var tile;
        if (row === 0) {
            // the mask was cut at a slant along its top edge
            tile = document.createElementNS(ns, "polygon");
            var x0 = col ? x : 0;
            var x1 = x + size;
            tile.setAttribute("points", x0 + "," + (11 - x0 * 11 / 258) + " " + x1 + "," + (11 - x1 * 11 / 258) + " " + x1 + ",24 " + x0 + ",24");
        } else {
            tile = document.createElementNS(ns, "rect");
            tile.setAttribute("x", x);
            tile.setAttribute("y", y);
            tile.setAttribute("width", size);
            tile.setAttribute("height", row === tiles.length - 1 ? size + 7 : size);
        }
        tile.setAttribute("fill", "#" + shade);
        svg.appendChild(tile);
    });
});
```
